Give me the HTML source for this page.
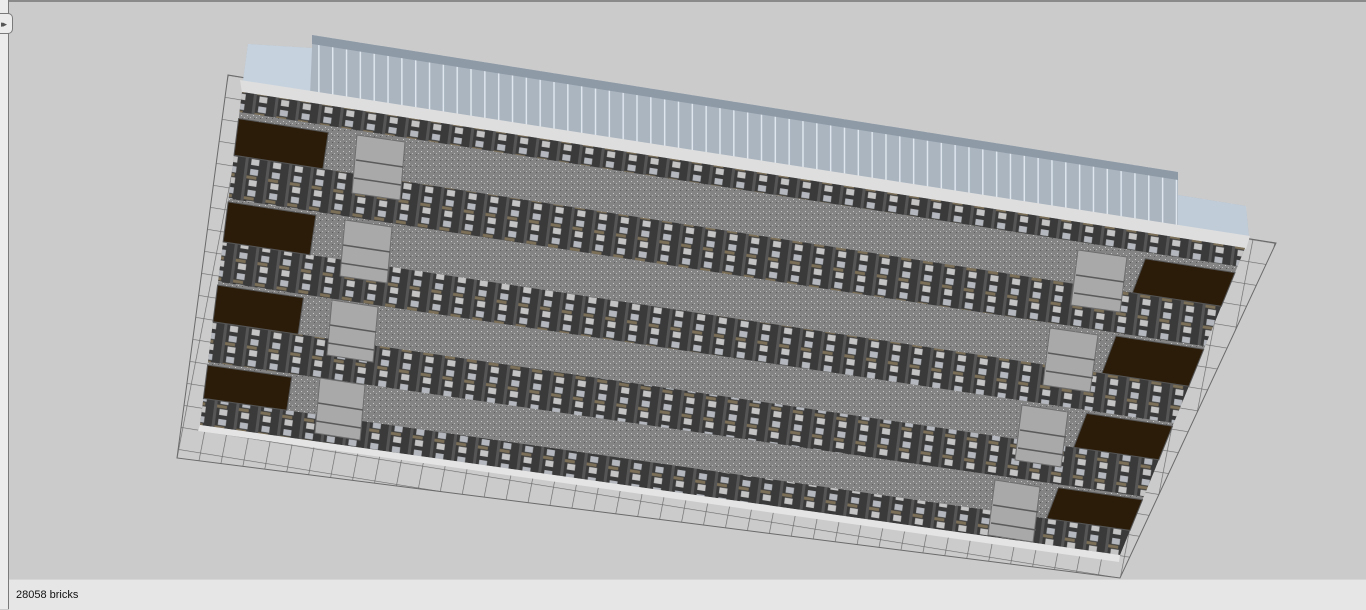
<!DOCTYPE html>
<html><head><meta charset="utf-8">
<style>
html,body{margin:0;padding:0;width:1366px;height:609px;overflow:hidden;background:#cbcbcb;font-family:"Liberation Sans",sans-serif}
#top{position:absolute;left:0;top:0;width:1366px;height:2px;background:#8a8a8a}
#left{position:absolute;left:0;top:0;width:8px;height:609px;background:#ececec;border-right:1px solid #7a7a7a}
#tab{position:absolute;left:0;top:13px;width:11px;height:21px;background:#ececec;border:1px solid #7a7a7a;border-left:none;border-radius:0 5px 5px 0;font-size:9px;line-height:21px;color:#555;letter-spacing:-3px;padding-left:1px;box-sizing:border-box;width:13px}
#status{position:absolute;left:9px;top:579px;width:1357px;height:30px;background:#e6e6e6;border-top:1px solid #d6d6d6}
#status span{position:absolute;left:7px;top:9px;font-size:11px;color:#111}
svg{position:absolute;left:0;top:0}
</style></head><body>
<svg width="1366" height="609" viewBox="0 0 1366 609">
<defs>
<pattern id="grid" patternUnits="userSpaceOnUse" width="1" height="1" patternTransform="matrix(21.8 3.5 -4.2 21.8 228 75)">
<path d="M0 0H1M0 0V1" stroke="#6a6a6a" stroke-width="0.06" fill="none"/>
</pattern>
<pattern id="ties" patternUnits="userSpaceOnUse" width="22" height="21" patternTransform="matrix(0.988 0.155 -0.127 0.992 0 0)">
<rect width="22" height="21" fill="#3a3a3a"/>
<rect x="0" y="0" width="3" height="21" fill="#565656"/>
<rect x="6" y="2" width="8" height="6" fill="#b4b8be"/>
<rect x="3" y="9" width="10" height="3" fill="#7d7058"/>
<rect x="6" y="13" width="8" height="6" fill="#c4c4c4"/>
</pattern>
<pattern id="glass" patternUnits="userSpaceOnUse" width="14" height="20" patternTransform="matrix(0.988 0.155 0 1 0 0)">
<rect width="14" height="20" fill="#aab5c0"/>
<rect x="0" y="0" width="1.5" height="20" fill="#dfe6ee"/>
</pattern>
<pattern id="grav" patternUnits="userSpaceOnUse" width="6" height="6">
<rect width="6" height="6" fill="#848484"/>
<rect x="1" y="1" width="1" height="1" fill="#c8c8c8"/>
<rect x="4" y="3" width="1" height="1" fill="#b8b8b8"/>
<rect x="2" y="4" width="1" height="1" fill="#5e5e5e"/>
</pattern>
</defs>
<polygon points="228,75 1276,243 1120,578 177,458" fill="url(#grid)"/>
<polygon points="228,75 1276,243 1120,578 177,458" fill="none" stroke="#6a6a6a" stroke-width="1"/>
<polygon points="248,44 312,48 312,35 1178,172 1178,195 1246,206 1249,238 242,88" fill="url(#glass)"/>
<polygon points="248,44 312,48 310,95 242,88" fill="#c6d2de"/>
<polygon points="1178,195 1246,206 1249,238 1178,228" fill="#c0ccd8"/>
<polygon points="312,35 1178,172 1178,180 312,44" fill="#8e9aa6"/>
<polygon points="240,80 1250,236 1246,249 242,93" fill="#dedede"/>
<polygon points="242,92 1245,248 1120,555 200,425" fill="url(#grav)"/>
<polygon points="242,92 1245,248 1237.5,266.4 239.5,112" fill="url(#ties)"/>
<polygon points="234,155.3 1221.3,306.3 1205,346.2 228.6,198.6" fill="url(#ties)"/>
<polygon points="223.1,241.9 1188.8,386.2 1173.8,423 218.1,281.8" fill="url(#ties)"/>
<polygon points="213,321.8 1158.8,459.8 1143.8,496.7 208,361.7" fill="url(#ties)"/>
<polygon points="203.4,398.4 1130,530.4 1120,555 200,425" fill="url(#ties)"/>
<polygon points="200,425 1120,555 1119,562 198,431" fill="#e4e4e4"/>
<g fill="#2b1c0a" stroke="#555" stroke-width="1">
<polygon points="238.6,118.6 328.3,132.5 322.9,168.9 234,155.3"/>
<polygon points="228.1,201.9 315.9,215.2 310,254.9 223.1,241.9"/>
<polygon points="217.6,285.1 303.5,297.8 298.1,334.2 213,321.8"/>
<polygon points="207.6,365.1 291.7,377.2 286.8,410.3 203.4,398.4"/>
<polygon points="1145.3,258.7 1235,272.6 1221.3,306.3 1132.4,292.7"/>
<polygon points="1115.9,336 1203.75,349.3 1188.8,386.2 1101.9,373.2"/>
<polygon points="1086.6,413.4 1172.5,426.1 1158.8,459.8 1073.7,447.4"/>
<polygon points="1058.4,487.6 1142.5,499.7 1130,530.4 1046.6,518.5"/>
</g>
<g fill="#a9a9a9" stroke="#6e6e6e" stroke-width="1">
<polygon points="357,135 405,142 400,200 352,193"/>
<polygon points="345,220 392,227 387,283 340,276"/>
<polygon points="332,300 378,307 373,362 327,355"/>
<polygon points="320,378 365,385 360,440 315,433"/>
<polygon points="1078,250 1127,257 1120,312 1071,305"/>
<polygon points="1050,328 1098,335 1090,392 1043,385"/>
<polygon points="1022,405 1068,412 1061,467 1015,460"/>
<polygon points="995,480 1040,487 1033,542 988,535"/>
</g>
<g stroke="#5a5a5a" stroke-width="1.5">
<line x1="356" y1="160" x2="403" y2="167"/><line x1="354" y1="178" x2="401" y2="185"/>
<line x1="343" y1="245" x2="390" y2="252"/><line x1="341" y1="263" x2="388" y2="270"/>
<line x1="330" y1="325" x2="376" y2="332"/><line x1="328" y1="343" x2="374" y2="350"/>
<line x1="318" y1="403" x2="363" y2="410"/><line x1="316" y1="421" x2="361" y2="428"/>
<line x1="1076" y1="275" x2="1124" y2="282"/><line x1="1074" y1="293" x2="1122" y2="300"/>
<line x1="1048" y1="353" x2="1095" y2="360"/><line x1="1046" y1="371" x2="1093" y2="378"/>
<line x1="1020" y1="430" x2="1066" y2="437"/><line x1="1018" y1="448" x2="1064" y2="455"/>
<line x1="993" y1="505" x2="1038" y2="512"/><line x1="991" y1="523" x2="1036" y2="530"/>
</g>
</svg>
<div id="top"></div>
<div id="left"></div>
<div id="tab">&#9656;&#9656;</div>
<div id="status"><span>28058 bricks</span></div>
</body></html>
